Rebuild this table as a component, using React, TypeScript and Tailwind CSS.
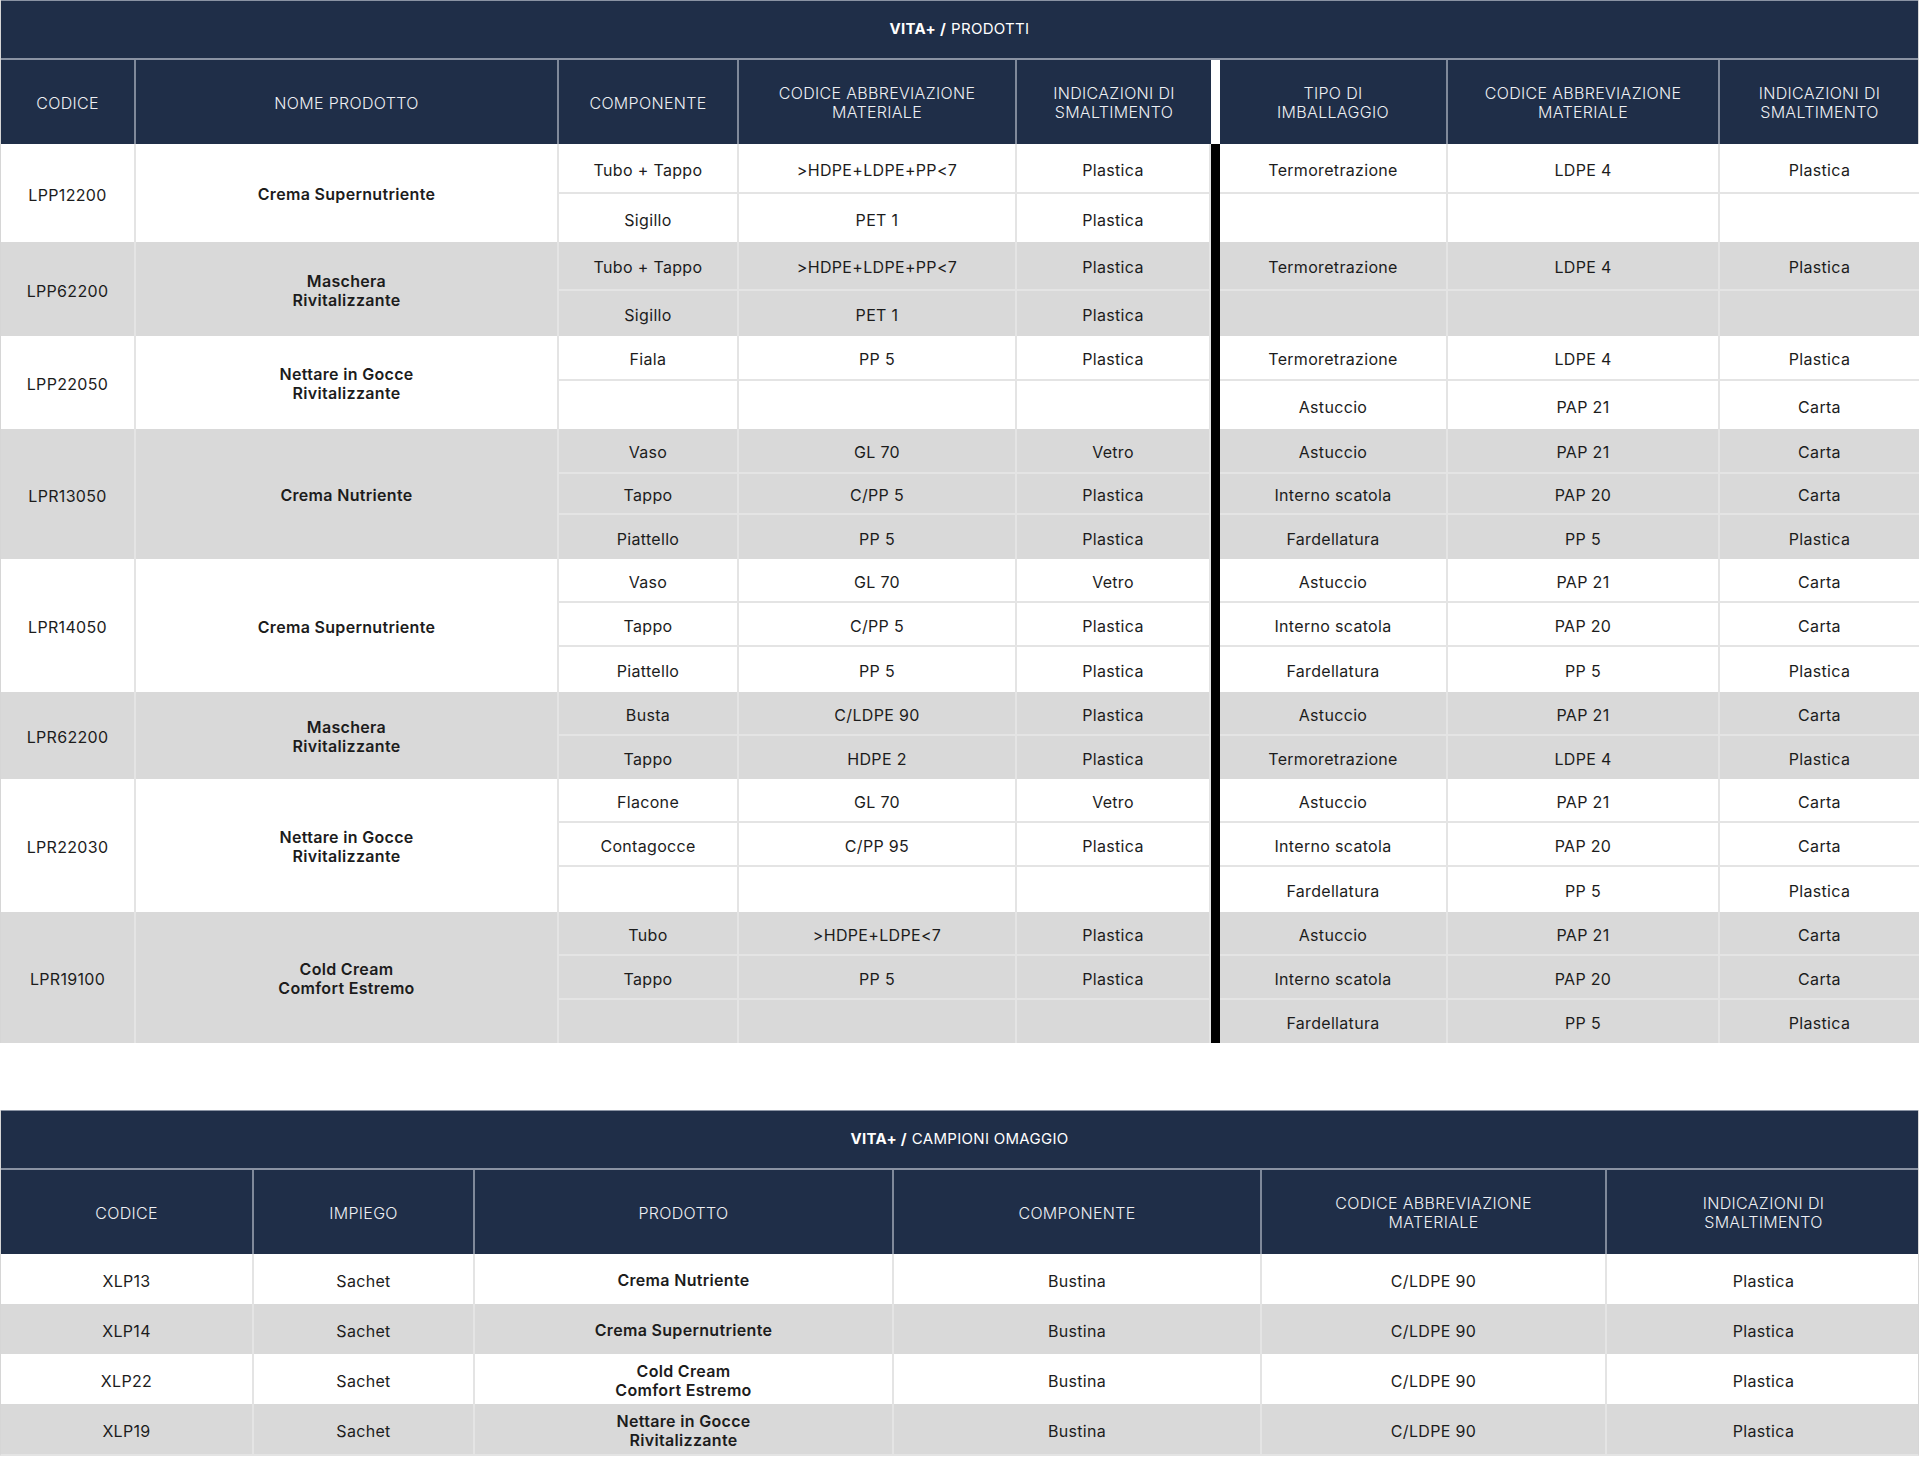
import React from "react"

type Sub = [string, string, string]

interface Group {
  code: string
  name: string[]
  gray: boolean
  heights: number[]
  left: Sub[]
  right: Sub[]
}

const E: Sub = ["", "", ""]
const PACK3: Sub[] = [
  ["Astuccio", "PAP 21", "Carta"],
  ["Interno scatola", "PAP 20", "Carta"],
  ["Fardellatura", "PP 5", "Plastica"],
]
const JAR: Sub[] = [
  ["Vaso", "GL 70", "Vetro"],
  ["Tappo", "C/PP 5", "Plastica"],
  ["Piattello", "PP 5", "Plastica"],
]

const groups: Group[] = [
  {
    code: "LPP12200",
    name: ["Crema Supernutriente"],
    gray: false,
    heights: [50, 48],
    left: [["Tubo + Tappo", ">HDPE+LDPE+PP<7", "Plastica"], ["Sigillo", "PET 1", "Plastica"]],
    right: [["Termoretrazione", "LDPE 4", "Plastica"], E],
  },
  {
    code: "LPP62200",
    name: ["Maschera", "Rivitalizzante"],
    gray: true,
    heights: [49, 45],
    left: [["Tubo + Tappo", ">HDPE+LDPE+PP<7", "Plastica"], ["Sigillo", "PET 1", "Plastica"]],
    right: [["Termoretrazione", "LDPE 4", "Plastica"], E],
  },
  {
    code: "LPP22050",
    name: ["Nettare in Gocce", "Rivitalizzante"],
    gray: false,
    heights: [45, 48],
    left: [["Fiala", "PP 5", "Plastica"], E],
    right: [["Termoretrazione", "LDPE 4", "Plastica"], ["Astuccio", "PAP 21", "Carta"]],
  },
  {
    code: "LPR13050",
    name: ["Crema Nutriente"],
    gray: true,
    heights: [45, 41, 44],
    left: JAR,
    right: PACK3,
  },
  {
    code: "LPR14050",
    name: ["Crema Supernutriente"],
    gray: false,
    heights: [44, 44, 45],
    left: JAR,
    right: PACK3,
  },
  {
    code: "LPR62200",
    name: ["Maschera", "Rivitalizzante"],
    gray: true,
    heights: [44, 43],
    left: [["Busta", "C/LDPE 90", "Plastica"], ["Tappo", "HDPE 2", "Plastica"]],
    right: [["Astuccio", "PAP 21", "Carta"], ["Termoretrazione", "LDPE 4", "Plastica"]],
  },
  {
    code: "LPR22030",
    name: ["Nettare in Gocce", "Rivitalizzante"],
    gray: false,
    heights: [44, 44, 45],
    left: [["Flacone", "GL 70", "Vetro"], ["Contagocce", "C/PP 95", "Plastica"], E],
    right: PACK3,
  },
  {
    code: "LPR19100",
    name: ["Cold Cream", "Comfort Estremo"],
    gray: true,
    heights: [44, 44, 43],
    left: [["Tubo", ">HDPE+LDPE<7", "Plastica"], ["Tappo", "PP 5", "Plastica"], E],
    right: PACK3,
  },
]

const samples = [
  { code: "XLP13", name: ["Crema Nutriente"], gray: false },
  { code: "XLP14", name: ["Crema Supernutriente"], gray: true },
  { code: "XLP22", name: ["Cold Cream", "Comfort Estremo"], gray: false },
  { code: "XLP19", name: ["Nettare in Gocce", "Rivitalizzante"], gray: true },
]

const leftW = ["w-[180px]", "w-[278px]", "w-[194px]"]
const rightW = ["w-[228px]", "w-[272px]", "w-[199px]"]

function TitleBar({ label }: { label: string }) {
  return (
    <div className="h-[60px] bg-[#1f2e48] border-t border-[#8a93a3] border-b-2 border-b-[#8a93a3] flex items-center justify-center text-[15px] text-white tracking-[0.02em]">
      <span className="font-bold">VITA+ /</span>
      <span className="ml-[5px] font-normal">{label}</span>
    </div>
  )
}

function HeadCell({ w, lines, last }: { w: string; lines: string[]; last?: boolean }) {
  return (
    <div
      className={`${w} shrink-0 h-full pt-[2px] flex flex-col items-center justify-center text-center text-[16px] leading-[19px] font-light tracking-[0.02em] text-[#eef0f4] ${
        last ? "" : "border-r-2 border-[#7f899a]"
      }`}
    >
      {lines.map((l) => (
        <span key={l}>{l}</span>
      ))}
    </div>
  )
}

function SubRows({ g, side, widths }: { g: Group; side: "left" | "right"; widths: string[] }) {
  const rows = side === "left" ? g.left : g.right
  return (
    <div className="flex flex-col">
      {rows.map((r, i) => (
        <div
          key={i}
          style={{ height: g.heights[i] }}
          className={`flex ${i < rows.length - 1 ? "border-b-2 border-[#e4e4e4]" : ""}`}
        >
          {r.map((c, j) => (
            <div
              key={j}
              className={`${widths[j]} shrink-0 pt-[3px] flex items-center justify-center ${
                j < 2 || side === "left" ? "border-r-2 border-[#e4e4e4]" : ""
              }`}
            >
              {c}
            </div>
          ))}
        </div>
      ))}
    </div>
  )
}

function Products() {
  return (
    <div className="w-[1919px] border-l border-r border-[#d6d6d6]">
      <TitleBar label="PRODOTTI" />
      <div className="h-[84px] bg-[#1f2e48] flex">
        <HeadCell w="w-[135px]" lines={["CODICE"]} />
        <HeadCell w="w-[423px]" lines={["NOME PRODOTTO"]} />
        <HeadCell w="w-[180px]" lines={["COMPONENTE"]} />
        <HeadCell w="w-[278px]" lines={["CODICE ABBREVIAZIONE", "MATERIALE"]} />
        <HeadCell w="w-[194px]" lines={["INDICAZIONI DI", "SMALTIMENTO"]} last />
        <div className="w-[9px] shrink-0 h-full bg-white" />
        <HeadCell w="w-[228px]" lines={["TIPO DI", "IMBALLAGGIO"]} />
        <HeadCell w="w-[272px]" lines={["CODICE ABBREVIAZIONE", "MATERIALE"]} />
        <HeadCell w="w-[199px]" lines={["INDICAZIONI DI", "SMALTIMENTO"]} last />
      </div>
      <div className="flex text-[16px] text-[#1c1c1c] tracking-[0.02em]">
        <div className="flex flex-col">
          {groups.map((g) => (
            <div key={g.code} className={`flex ${g.gray ? "bg-[#d9d9d9]" : "bg-white"}`}>
              <div className="w-[135px] shrink-0 pt-[3px] flex items-center justify-center border-r-2 border-[#e4e4e4]">
                {g.code}
              </div>
              <div className="w-[423px] shrink-0 pt-[3px] flex flex-col items-center justify-center font-semibold leading-[19px] border-r-2 border-[#e4e4e4]">
                {g.name.map((n) => (
                  <span key={n}>{n}</span>
                ))}
              </div>
              <SubRows g={g} side="left" widths={leftW} />
            </div>
          ))}
        </div>
        <div className="w-[9px] shrink-0 bg-black" />
        <div className="flex flex-col">
          {groups.map((g) => (
            <div key={g.code} className={`flex ${g.gray ? "bg-[#d9d9d9]" : "bg-white"}`}>
              <SubRows g={g} side="right" widths={rightW} />
            </div>
          ))}
        </div>
      </div>
    </div>
  )
}

function Samples() {
  const w = ["w-[253px]", "w-[221px]", "w-[419px]", "w-[368px]", "w-[345px]", "w-[313px]"]
  const cell = "shrink-0 pt-[3px] flex items-center justify-center"
  return (
    <div className="w-[1919px] border-l border-r border-[#d6d6d6] border-b-2 border-b-[#e4e4e4]">
      <TitleBar label="CAMPIONI OMAGGIO" />
      <div className="h-[84px] bg-[#1f2e48] flex">
        <HeadCell w={w[0]} lines={["CODICE"]} />
        <HeadCell w={w[1]} lines={["IMPIEGO"]} />
        <HeadCell w={w[2]} lines={["PRODOTTO"]} />
        <HeadCell w={w[3]} lines={["COMPONENTE"]} />
        <HeadCell w={w[4]} lines={["CODICE ABBREVIAZIONE", "MATERIALE"]} />
        <HeadCell w={w[5]} lines={["INDICAZIONI DI", "SMALTIMENTO"]} last />
      </div>
      <div className="flex flex-col text-[16px] text-[#1c1c1c] tracking-[0.02em]">
        {samples.map((s) => (
          <div key={s.code} className={`h-[50px] flex ${s.gray ? "bg-[#d9d9d9]" : "bg-white"}`}>
            <div className={`${w[0]} ${cell} border-r-2 border-[#e4e4e4]`}>{s.code}</div>
            <div className={`${w[1]} ${cell} border-r-2 border-[#e4e4e4]`}>Sachet</div>
            <div className={`${w[2]} ${cell} flex-col font-semibold leading-[19px] border-r-2 border-[#e4e4e4]`}>
              {s.name.map((n) => (
                <span key={n}>{n}</span>
              ))}
            </div>
            <div className={`${w[3]} ${cell} border-r-2 border-[#e4e4e4]`}>Bustina</div>
            <div className={`${w[4]} ${cell} border-r-2 border-[#e4e4e4]`}>C/LDPE 90</div>
            <div className={`${w[5]} ${cell}`}>Plastica</div>
          </div>
        ))}
      </div>
    </div>
  )
}

export default function App() {
  return (
    <div className="w-[1920px] min-h-[1478px] bg-white font-['Inter',sans-serif]">
      <Products />
      <div className="h-[67px]" />
      <Samples />
    </div>
  )
}
